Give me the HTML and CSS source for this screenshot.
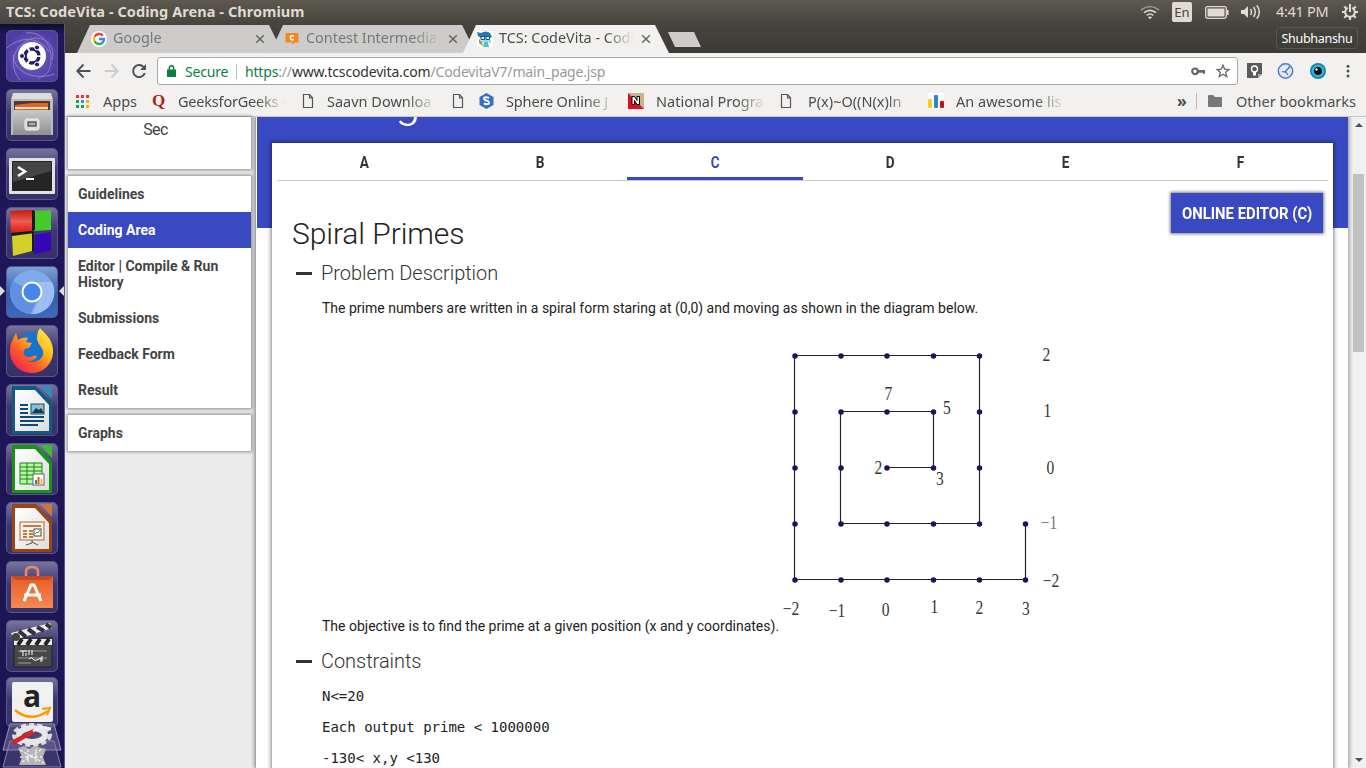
FILE: index.html
```html
<!DOCTYPE html>
<html lang="en">
<head>
<meta charset="utf-8">
<title>TCS: CodeVita - Coding Arena</title>
<link rel="stylesheet" href="styles.css">
</head>
<body>
<svg width="0" height="0" class="defs" aria-hidden="true">
  <defs>
    <linearGradient id="metal" x1="0" y1="0" x2="0" y2="1"><stop offset="0" stop-color="#c9c9c9"/><stop offset="1" stop-color="#8f8f8f"/></linearGradient>
    <linearGradient id="bag" x1="0" y1="0" x2="0" y2="1"><stop offset="0" stop-color="#e85a24"/><stop offset="1" stop-color="#f58a55"/></linearGradient>
    <linearGradient id="flame" x1=".9" y1="0" x2=".1" y2="1"><stop offset="0" stop-color="#fff04a"/><stop offset=".35" stop-color="#ffbd1f"/><stop offset=".65" stop-color="#ff5a2a"/><stop offset="1" stop-color="#e8155f"/></linearGradient>
    <linearGradient id="paper" x1="0" y1="0" x2="1" y2="1"><stop offset="0" stop-color="#fff"/><stop offset="1" stop-color="#dedede"/></linearGradient>
    <linearGradient id="red" x1="0" y1="0" x2="0" y2="1"><stop offset="0" stop-color="#c21a12"/><stop offset=".5" stop-color="#ef5b50"/><stop offset="1" stop-color="#d91c10"/></linearGradient>
    <symbol id="doc" viewBox="0 0 12 16"><path d="M1.500 1.500h6l3 3.300v9.700h-9zM7.500 1.500v3.500h3" fill="none" stroke="#555" stroke-width="1.200"/></symbol>
    <symbol id="close" viewBox="0 0 10 10"><path d="M1.200 1.200l7.600 7.600M8.800 1.200L1.200 8.800" stroke="#666" stroke-width="1.500" fill="none"/></symbol>
  </defs>
</svg>
<div class="screen">
  <header class="panel">
    <span class="panel-title">TCS: CodeVita - Coding Arena - Chromium</span>
    <div class="indicators">
      <svg class="i-wifi" width="20" height="16" viewBox="0 0 20 16" fill="none" stroke="#dfdbd2" stroke-width="1.700"><path d="M1 6q9-7 18 0" stroke="#99958c"/><path d="M4 8.700q6-4.700 12 0M6.700 11.300q3.300-2.600 6.600 0"/><path d="M8 13.200q2-1.400 4 0l-2 2z" fill="#dfdbd2" stroke="none"/></svg>
      <span class="lang">En</span>
      <svg class="i-bat" width="24" height="13" viewBox="0 0 24 13"><rect x=".7" y=".7" width="20.600" height="11.600" rx="1.800" fill="none" stroke="#dfdbd2" stroke-width="1.300"/><rect x="2.500" y="2.500" width="17" height="8" fill="#dfdbd2"/><path d="M22 4h1.600v5H22" fill="#dfdbd2"/></svg>
      <svg class="i-vol" width="20" height="16" viewBox="0 0 20 16"><path d="M0 6h3l4-4v12l-4-4H0z" fill="#dfdbd2"/><path d="M9.500 5q2 3 0 6M12.500 3q3.500 5 0 10M15.800 1.200q5 6.800 0 13.600" fill="none" stroke="#dfdbd2" stroke-width="1.500"/></svg>
      <span class="clock">4:41 PM</span>
      <svg class="i-gear" width="16" height="16" viewBox="0 0 16 16" fill="none" stroke="#dfdbd2"><path d="M5.800 3.800a4.800 4.800 0 1 0 4.400 0" stroke-width="2"/><path d="M8 0v8" stroke-width="2"/><path d="M8 13v3M0 8h3M13 8h3M2.300 2.500l2 2M13.700 2.500l-2 2M2.300 13.700l2-2M13.700 13.700l-2-2" stroke-width="2.200"/></svg>
    </div>
  </header>
  <div class="desktop">
    <nav class="launcher">
      <div class="tile dash"><svg viewBox="0 0 52 52"><g fill="none" stroke="#9d8ad4" stroke-opacity=".8" stroke-width="1"><path d="M14 50C2 36 6 14 28 8c12-1 22 8 18 22M20 3c14-2 26 10 25 27s-9 15-13 19M1 18C14 6 34 6 43 22M49 44C31 50 9 45 7 25"/></g><circle cx="26" cy="26" r="14" fill="#fff"/><circle cx="26" cy="26" r="7" fill="none" stroke="#2a1c63" stroke-width="3.400" stroke-dasharray="12.700 2" stroke-dashoffset="-1"/><g fill="#2a1c63" stroke="#fff" stroke-width="1"><circle cx="16" cy="26" r="2.500"/><circle cx="31" cy="17.500" r="2.500"/><circle cx="31" cy="34.500" r="2.500"/></g></svg></div>
      <div class="tile"><svg viewBox="0 0 52 52"><path d="M7 4h38l2 7H5z" fill="#ddd"/><path d="M5 10h42v36H5z" fill="#bcbcbc"/><path d="M8 12h36v10H8z" fill="#4b3b35"/><path d="M9 16l17-2h16v7H9z" fill="#e8631b"/><path d="M9 18h33v2H9z" fill="#f8e8d0"/><path d="M7 21h38v25H7z" fill="url(#metal)"/><rect x="19" y="30" width="14" height="11" rx="2" fill="#ddd" stroke="#eee"/><rect x="22" y="33" width="8" height="4" fill="#aaa" stroke="#444" stroke-width="1.200"/></svg></div>
      <div class="tile"><svg viewBox="0 0 52 52"><rect x="3" y="10" width="46" height="36" rx="1" fill="#e2e2e2"/><rect x="6" y="13" width="40" height="30" fill="#252525"/><path d="M7 14h38v9L7 34z" fill="#454545"/><path d="M12 19l7 4.500-7 4.500" fill="none" stroke="#fff" stroke-width="2.600"/><path d="M20 31h8" stroke="#fff" stroke-width="2"/></svg></div>
      <div class="tile"><svg viewBox="0 0 52 52"><path d="M4 4l22-1v21l-21 2z" fill="url(#red)"/><path d="M29 4l16-1v20l-17 1z" fill="#45cc2c"/><path d="M6 28l20-3v19L7 49z" fill="#d3cf26"/><path d="M29 28l16-3v19l-17 3z" fill="#3507b7"/><path d="M26 3l3 1v19l-3 1M5 26l21-2 3 2-23 3zM26 26l2 1v18l-2-1" fill="#1a1a1a"/></svg></div>
      <div class="tile active"><svg viewBox="0 0 52 52"><circle cx="26" cy="26" r="22" fill="#81a9ed"/><path d="M26 26L7 15a22 22 0 0 0 17 33l9-17z" fill="#6090e2"/><path d="M26 16h20A22 22 0 0 1 26 48l8-16z" fill="#9dbdf4"/><circle cx="26" cy="26" r="9.500" fill="#4685e9" stroke="#fff" stroke-width="2"/></svg></div>
      <div class="tile"><svg viewBox="0 0 52 52"><circle cx="27" cy="24" r="17" fill="#1673cf"/><path d="M34 3c4 5 12 10 13 21 1 14-9 24-21 24S4 39 4 26c0-7 3-12 6-18l2 7c3-2 6-3 10-2l-2 4 6 1-3 5c-7 0-7 7-2 9 5 1 7-3 10-1-2 6-10 5-10 5 10 4 18-4 16-10-1-4-5-7-6-12 0-5 1-8 3-11z" fill="url(#flame)"/></svg></div>
      <div class="tile"><svg viewBox="0 0 52 52"><path d="M6 2h24l16 17v31H6z" fill="#105a83"/><path d="M9 6h20l14 15v26H9z" fill="url(#paper)"/><path d="M34 2h12v13z" fill="#368bb8"/><g stroke="#0c4c76" stroke-width="2"><path d="M14 21h8M14 25h8M14 29h8M14 33h24M14 37h24M14 41h18"/></g><rect x="25" y="20" width="13" height="10" fill="#87bdd8" stroke="#0c4c76"/><path d="M26 29l4-5 3 2 2-2 3 5" fill="#183d45"/><circle cx="35" cy="22" r="1.500" fill="#e9b64e"/></svg></div>
      <div class="tile"><svg viewBox="0 0 52 52"><path d="M6 2h24l16 17v31H6z" fill="#199414"/><path d="M9 6h20l14 15v26H9z" fill="url(#paper)"/><path d="M34 2h12v13z" fill="#43ba34"/><rect x="14" y="20" width="22" height="21" fill="#baf5a5"/><path d="M14 20h22v21H14zM21 20v21M28 20v21M14 24h22M14 28h22M14 32h22M14 36h22" fill="none" stroke="#158712"/><rect x="27" y="31" width="11" height="11" fill="#fff" stroke="#666"/><path d="M29 41v-4h2v4" fill="#2b83bb"/><path d="M31.500 41v-7h2v7" fill="#d75a22"/><path d="M34.500 41v-5h2v5" fill="#e9bf34"/></svg></div>
      <div class="tile"><svg viewBox="0 0 52 52"><path d="M6 2h24l16 17v31H6z" fill="#9b4516"/><path d="M9 6h20l14 15v26H9z" fill="url(#paper)"/><path d="M34 2h12v13z" fill="#cb7540"/><rect x="14" y="20" width="24" height="18" fill="#fff4e8" stroke="#b65d2a"/><path d="M17 24h18M17 29h4M17 32h4M17 35h4M23 29h4M23 32h4M23 35h4" stroke="#b34f1c" stroke-width="1.700"/><rect x="28" y="27" width="7" height="7" fill="#fff" stroke="#444"/><path d="M29 32l2-2 1 1 2-3" fill="none" stroke="#35a43b"/><path d="M26 38v3l-6 2M26 40l6 3" fill="none" stroke="#555"/></svg></div>
      <div class="tile"><svg viewBox="0 0 52 52"><path d="M20 18V11q0-5 6-5t6 5v7" fill="none" stroke="#e98a65" stroke-width="2.500"/><path d="M5 15h42v32H5z" fill="url(#bag)"/><path d="M5 15h42l-4 4H10z" fill="#c64a1f"/><path d="M18 40l7-16h3l7 16M18 34h17" fill="none" stroke="#fff" stroke-width="3"/></svg></div>
      <div class="tile"><svg viewBox="0 0 52 52"><path d="M8 18h38v29H8z" fill="#484848" stroke="#222"/><path d="M5 13L44 3l2 5L9 20z" fill="#eee"/><path d="M13 11l7 6M22 9l7 5M31 7l7 4M40 4l5 4" stroke="#333" stroke-width="4"/><path d="M8 19h38v6H8z" fill="#eee"/><path d="M12 25l4-6M21 25l4-6M30 25l4-6M39 25l4-6" stroke="#222" stroke-width="4"/><circle cx="10" cy="17" r="4" fill="#444"/><path d="M12 31h29M12 38h29M12 43h13" stroke="#999"/><path d="M14 31h7M17 31v5M20 33v3M23 30v5M26 30v5M23 39q3-3 4 0t8-1v4M36 36v5" stroke="#fff" fill="none"/></svg></div>
      <div class="tile amazon"><svg viewBox="0 0 52 52"><rect x="6" y="5" width="41" height="40" rx="2" fill="#f1f1f1"/><text x="26" y="30" text-anchor="middle">a</text><path d="M9 33q15 13 33 1" fill="none" stroke="#ff9900" stroke-width="2.500"/><path d="M36 32l8-1-3 7" fill="none" stroke="#ff9900" stroke-width="2"/></svg></div>
      <div class="stack"><svg viewBox="0 0 60 48"><path d="M8 4h44l7 26H1z" fill="#77709d" fill-opacity=".55" stroke="#9992ba"/><path d="M8 21h44l7 26H1z" fill="#77709d" fill-opacity=".35" stroke="#8a84ac"/><ellipse cx="30" cy="15" rx="18" ry="10" fill="none" stroke="#ddd" stroke-width="4" stroke-dasharray="5 3"/><ellipse cx="30" cy="15" rx="13" ry="7" fill="none" stroke="#e7e7e7" stroke-width="6"/><path d="M12 22L32 11" stroke="#cf2626" stroke-width="4.500" stroke-linecap="round"/><path d="M31 11l8-4 10 2" stroke="#eee" stroke-width="3" fill="none"/><path d="M16 28l6-2 5 3 5-3 12 3-3 8 3 8H17l3-8z" fill="#b5b5b5"/><path d="M18 30l24 13M20 42l20-13M18 37h22M26 29v15M34 29v15" stroke="#eee" stroke-width="1.300" stroke-dasharray="3 2"/></svg></div>
      <i class="arrow arrow-l"></i><i class="arrow arrow-r"></i>
    </nav>
    <main class="browser">
      <div class="tabstrip">
        <div class="tab"><svg class="fav" viewBox="0 0 16 16"><circle cx="8" cy="8" r="8" fill="#fff"/><g fill="none" stroke-width="2.400"><path d="M11.800 4.700A5 5 0 0 0 3.600 5.700" stroke="#ea4335"/><path d="M3.600 5.700a5 5 0 0 0 0 4.600" stroke="#fbbc05"/><path d="M3.600 10.300a5 5 0 0 0 7.700 1.500" stroke="#34a853"/><path d="M11.300 11.800A5 5 0 0 0 13 8H8" stroke="#4285f4"/></g></svg><span class="tab-name">Google</span><svg class="x"><use href="#close"/></svg></div>
        <div class="tab"><svg class="fav" viewBox="0 0 16 16"><path d="M2.500 2h11q1 0 1 1v8.500h-4l-2 2.500v-2.500h-6q-1 0-1-1V3q0-1 1-1z" fill="#f7861c"/><path d="M10 5.200q-3.600-1.600-3.600 1.500t3.600 1.600" fill="none" stroke="#fff" stroke-width="1.500"/></svg><span class="tab-name">Contest Intermedia</span><svg class="x"><use href="#close"/></svg></div>
        <div class="tab current"><svg class="fav" viewBox="0 0 16 16"><path d="M0 0h16v16H0z" fill="#fff"/><path d="M0 1l4 1q5-3 9 0l2 4-2 1H4L1 5z" fill="#2678b5"/><path d="M4 6h9l-1 5H5z" fill="#9fdce8"/><path d="M4 5.500h3.500v3H4zM9 5.500h3.500v3H9z" fill="#def" stroke="#185178"/><path d="M7 11h4l1 5H6z" fill="#57bdd3"/><path d="M2 8l3 3 1 4-4-3z" fill="#899e3b"/><path d="M12 10l2-1-1 4z" fill="#57bdd3"/></svg><span class="tab-name">TCS: CodeVita - Codi</span><svg class="x"><use href="#close"/></svg></div>
        <i class="newtab"></i>
        <span class="profile">Shubhanshu</span>
      </div>
      <div class="toolbar">
        <svg class="navs" width="72" height="16" viewBox="0 0 72 16" fill="none" stroke-width="2"><path d="M14.500 8H1.500M7.500 1.500L1.300 8l6.200 6.500" stroke="#505050"/><path d="M28.500 8h13M35.500 1.500L41.700 8l-6.200 6.500" stroke="#ccc"/><path d="M67.500 4a6 6 0 1 0 1.300 6" stroke="#505050"/><path d="M70 1v6h-6z" fill="#505050" stroke="none"/></svg>
        <div class="omnibox">
          <svg class="lock" width="9" height="12" viewBox="0 0 9 12"><path d="M2.300 5V3a2.200 2.200 0 0 1 4.400 0v2" fill="none" stroke="#0b8043" stroke-width="1.400"/><path d="M0 4.500h9V12H0z" fill="#0b8043"/></svg>
          <span class="secure">Secure</span><i class="sep"></i>
          <span class="url"><b class="green">https</b>://<b class="host">www.tcscodevita.com</b>/CodevitaV7/main_page.jsp</span>
          <svg class="key" width="15" height="9" viewBox="0 0 15 9"><circle cx="4" cy="4.300" r="2.800" fill="none" stroke="#666" stroke-width="2.200"/><path d="M6 3h8v3.700h-2V5.700H6z" fill="#666"/></svg>
          <svg class="star" width="14" height="14" viewBox="0 0 14 14"><path d="M7 1.200l1.700 4 4.300.3-3.300 2.800 1.100 4.300L7 10.300l-3.800 2.300 1.100-4.300L1 5.500l4.300-.3z" fill="none" stroke="#666" stroke-width="1.300"/></svg>
        </div>
        <svg class="ext" width="80" height="16" viewBox="0 0 80 16"><path d="M0 0h15v11l-4 4H0z" fill="#5b5b5b"/><circle cx="7.500" cy="6" r="3" fill="none" stroke="#fff" stroke-width="1.400"/><path d="M6 9h3v3.500H6z" fill="#fff"/><path d="M11 15v-4h4" fill="#aaa"/><circle cx="38.500" cy="8" r="7.200" fill="#e5eefc" stroke="#4f78ca" stroke-width="1.400"/><circle cx="38.500" cy="8" r="5.300" fill="none" stroke="#a9c3eb" stroke-dasharray="1 1.500"/><path d="M43 3.500L38 9l-3-.5M38 8l3 4" stroke="#426abc" fill="none" stroke-width="1.200"/><circle cx="71" cy="8" r="8" fill="#1486ad"/><circle cx="71" cy="8" r="6.200" fill="#35b5dc"/><circle cx="71" cy="8" r="4" fill="#111"/><circle cx="69.500" cy="6.500" r="1.200" fill="#dff"/></svg>
        <svg class="dots" width="4" height="14" viewBox="0 0 4 14" fill="#555"><circle cx="2" cy="2.300" r="1.500"/><circle cx="2" cy="7" r="1.500"/><circle cx="2" cy="11.900" r="1.500"/></svg>
      </div>
      <div class="bookmarks">
        <div class="bm b1"><svg width="13" height="13" viewBox="0 0 13 13"><path d="M0 0h3v3H0zM5 0h3v3H5zM10 0h3v3h-3z" fill="#e33"/><path d="M0 5h3v3H0zM0 10h3v3H0zM5 10h3v3H5z" fill="#19a350"/><path d="M5 5h3v3H5z" fill="#4285f4"/><path d="M10 5h3v3h-3zM10 10h3v3h-3z" fill="#f5ad13"/></svg><span>Apps</span></div>
        <div class="bm b2"><em class="quora">Q</em><span>GeeksforGeeks -</span></div>
        <div class="bm b3"><svg width="12" height="16"><use href="#doc"/></svg><span>Saavn Downloa</span></div>
        <div class="bm b4"><svg width="12" height="16"><use href="#doc"/></svg></div>
        <div class="bm b5"><svg width="15" height="16" viewBox="0 0 15 16"><path d="M7.500 0l7 4v8l-7 4-7-4V4z" fill="#3671c6"/><path d="M10 5q-5-2-5 .8c0 2 5 1.400 5 3.600 0 2.400-3.500 2-5.200 1" fill="none" stroke="#fff" stroke-width="1.900"/></svg><span>Sphere Online J</span></div>
        <div class="bm b6"><svg width="16" height="16" viewBox="0 0 16 16"><path d="M0 0h16v16H0z" fill="#c5b48e"/><path d="M0 0l16 16H0z" fill="#e20b26"/><path d="M4 3.500h2.500l2.500 4v-4h2.500v8H9l-2.500-4v4H4z" fill="#fff" stroke="#000"/></svg><span>National Progra</span></div>
        <div class="bm b7"><svg width="12" height="16"><use href="#doc"/></svg><span>P(x)~O((N(x)ln</span></div>
        <div class="bm b8"><svg width="16" height="16" viewBox="0 0 16 16"><path d="M0 0h16v16H0z" fill="#fff"/><rect y="6" width="4" height="9" rx="1" fill="#f4cd20"/><rect x="6" y="2" width="4" height="13" rx="1" fill="#2985d6"/><rect x="12" y="8" width="4" height="7" rx="1" fill="#c7101f"/></svg><span>An awesome lis</span></div>
        <span class="more">»</span><i class="bsep"></i>
        <svg class="folder" width="15" height="12" viewBox="0 0 15 12"><path d="M0 1q0-1 1-1h4l2 2h6q1 0 1 1v8q0 1-1 1H1q-1 0-1-1z" fill="#777"/></svg>
        <span class="other">Other bookmarks</span>
      </div>
      <div class="page">
        <aside class="side">
          <div class="card user">Sec</div>
          <div class="card menu"><a>Guidelines</a><a class="on">Coding Area</a><a>Editor | Compile &amp; Run History</a><a>Submissions</a><a>Feedback Form</a><a>Result</a></div>
          <div class="card menu"><a>Graphs</a></div>
        </aside>
        <section class="content">
          <div class="banner"><h1>Coding Arena</h1></div>
          <article class="sheet">
            <div class="problems"><span><b>A</b></span><span><b>B</b></span><span class="sel"><b>C</b></span><span><b>D</b></span><span><b>E</b></span><span><b>F</b></span></div>
            <div class="actions"><button><span>ONLINE EDITOR (C)</span></button></div>
            <h2>Spiral Primes</h2>
            <h3>Problem Description</h3>
            <p class="intro">The prime numbers are written in a spiral form staring at (0,0) and moving as shown in the diagram below.</p>
            <div class="figure"><p>The objective is to find the prime at a given position (x and y coordinates).</p>
              <svg class="spiral" width="300" height="290" viewBox="778 340 300 290">
                <path d="M887 467.500H933.500V411.500H840.500V523.500H979.500V355.500H794.500V579.500H1025.500V523.500" fill="none" stroke="#222" stroke-width="1.150"/>
                <path class="pts" d="M795 356h0M841 356h0M887 356h0M933.500 356h0M979.500 356h0M795 412h0M841 412h0M887 412h0M933.500 412h0M979.500 412h0M795 468h0M841 468h0M887 468h0M933.500 468h0M979.500 468h0M795 524h0M841 524h0M887 524h0M933.500 524h0M979.500 524h0M1025.500 524h0M795 580h0M841 580h0M887 580h0M933.500 580h0M979.500 580h0M1025.500 580h0"/>
                <g class="nums" transform="scale(.84 1)"><text x="1245.800" y="361">2</text><text x="1247" y="417">1</text><text x="1250.600" y="474">0</text><text x="1248.800" y="529" class="pale">−1</text><text x="1251.200" y="587">−2</text><text x="1057.700" y="400">7</text><text x="1127.400" y="414">5</text><text x="1045.800" y="474">2</text><text x="1119" y="485">3</text><text x="941.700" y="615">−2</text><text x="996.400" y="617">−1</text><text x="1054.200" y="616">0</text><text x="1112.500" y="613">1</text><text x="1166" y="614">2</text><text x="1221.400" y="615">3</text></g>
              </svg>
            </div>
            <h3 class="h-con">Constraints</h3>
            <pre>N&lt;=20</pre><pre>Each output prime &lt; 1000000</pre><pre>-130&lt; x,y &lt;130</pre>
          </article>
        </section>
        <div class="scroll"><i class="up"></i><i class="thumb"></i><i class="down"></i></div>
      </div>
    </main>
  </div>
</div>
</body>
</html>
```
FILE: styles.css
```css
* { box-sizing: border-box; }
html, body { margin: 0; height: 100%; overflow: hidden; }
body { font-family: "Noto Sans", "Open Sans", sans-serif; }
svg { display: block; flex: none; }
.defs { position: absolute; }
.screen { width: 1366px; height: 768px; display: flex; flex-direction: column; overflow: hidden; }
.panel { height: 24px; flex: none; display: flex; justify-content: space-between; padding: 0 8px 0 6px; background: linear-gradient(#5d594f, #45443d); color: #dfdbd2; }
.panel-title { font-size: 14.500px; font-weight: 700; line-height: 23px; white-space: nowrap; letter-spacing: .07px; }
.indicators { display: flex; align-items: center; }
.lang { width: 20px; height: 20px; margin-left: 12px; border-radius: 2px; background: #dfdbd2; color: #45443d; font-size: 13px; line-height: 20px; text-align: center; }
.i-bat { margin-left: 13px; }
.i-vol { margin-left: 12px; }
.clock { width: 54px; margin: -2px 12px 0 15px; font-size: 14.500px; line-height: 20px; white-space: nowrap; letter-spacing: -.3px; }
.desktop { flex: 1; display: flex; min-height: 0; }

.launcher { width: 65px; flex: none; position: relative; display: flex; flex-direction: column; align-items: center; gap: 7px; padding: 6px 1px 0 0; background: linear-gradient(#0f0c2e, #1f1759 10px, #1c1553); border-right: 1px solid #5c5881; overflow: hidden; }
.tile { width: 52px; height: 52px; flex: none; border-radius: 5px; background: linear-gradient(#77739a, #3c3770 45%, #383168); border: 1px solid #5a558c; }
.tile svg { width: 52px; height: 52px; margin: -1px; }
.tile.dash { background: radial-gradient(#7d66c8, #4d3da3 75%); }
.tile.active { background: linear-gradient(#7da1d3, #315fb0 55%, #3d6ab9); }
.tile.amazon { margin-top: -2px; height: 50px; }
.amazon text { font: 700 30px "Open Sans", sans-serif; fill: #222; }
.stack { margin-top: -14px; }
.stack svg { width: 60px; height: 48px; }
.arrow { position: absolute; top: 262px; border: 5px solid transparent; }
.arrow-l { left: 0; border-left-color: #ddd; border-right: 0; }
.arrow-r { right: 0; border-right-color: #ddd; border-left: 0; }

.browser { flex: 1; min-width: 0; display: flex; flex-direction: column; }
.tabstrip { height: 29px; flex: none; display: flex; padding: 1px 16px 0 12px; background: linear-gradient(#45443d, #3c3b37); }
.tab { width: 206px; height: 28px; margin-right: -13px; display: flex; align-items: center; padding: 0 16px 0 14px; background: #cdcccb; clip-path: polygon(0 100%, 13px 0, 192px 0, 100% 100%); color: #777; font-size: 14.400px; }
.tab.current { position: relative; background: #f2f1f0; color: #4c4c4c; }
.fav { width: 16px; height: 16px; }
.tab-name { width: 137px; height: 20px; margin: -2px 0 0 6px; line-height: 20px; overflow: hidden; white-space: nowrap; -webkit-mask-image: linear-gradient(90deg, #000 78%, transparent 98%); mask-image: linear-gradient(90deg, #000 78%, transparent 98%); }
.x { width: 10px; height: 10px; margin-left: 5px; }
.newtab { width: 33px; height: 15px; margin: 7px 0 0 12px; background: #cdcccb; clip-path: polygon(0 0, 26px 0, 100% 100%, 7px 100%); }
.profile { width: 82px; height: 22px; margin: 2px -8px 0 auto; border: 1px solid #56544d; border-radius: 4px; color: #fff; font-size: 12.500px; line-height: 21px; text-align: center; white-space: nowrap; letter-spacing: -.3px; }
.tabstrip .profile { margin-right: -8px; }
.toolbar { height: 35px; flex: none; display: flex; align-items: center; background: #f2f1f0; padding: 1px 16px 0 11px; }
.omnibox { width: 1081px; height: 28px; margin-left: 9px; display: flex; align-items: center; padding: 0 7px 0 9px; background: #fff; border: 1px solid #aaa; border-radius: 3px; font-size: 14px; }
.secure { width: 43px; margin-left: 9px; color: #0b8043; white-space: nowrap; letter-spacing: -.2px; }
.sep { width: 1px; height: 15px; margin: 0 8px 0 8px; background: #bbb; }
.url { flex: 1; color: #999; white-space: nowrap; letter-spacing: -.17px; }
.url b { font-weight: 400; }
.url .green { color: #0b8043; }
.url .host { color: #333; }
.star { margin-left: 10px; }
.ext { margin-left: 9px; }
.dots { margin-left: auto; }
.bookmarks { height: 29px; flex: none; display: flex; align-items: center; padding: 0 10px 2px 11px; background: #f2f1f0; border-bottom: 1px solid #c8c7c6; color: #4c4c4c; font-size: 14.500px; line-height: 20px; white-space: nowrap; }
.bm { display: flex; align-items: center; flex: none; }
.bm span { overflow: hidden; -webkit-mask-image: linear-gradient(90deg, #000 72%, transparent 98%); mask-image: linear-gradient(90deg, #000 72%, transparent 98%); }
.b1 { width: 76px; }
.bm.b1 span { margin-left: 14px; -webkit-mask-image: none; mask-image: none; }
.b2 { width: 150px; letter-spacing: -.2px; }
.b2 span { width: 110px; margin-left: 12px; }
.b3 { width: 150px; }
.b3 span { width: 112px; margin-left: 13px; }
.b4 { width: 27px; }
.b5 { width: 149px; }
.b5 span { width: 112px; margin-left: 12px; letter-spacing: -.15px; }
.b6 { width: 152px; }
.b6 span { width: 112px; margin-left: 12px; }
.b7 { width: 148px; }
.b7 span { width: 109px; margin-left: 16px; }
.b8 { width: 220px; }
.b8 span { width: 112px; margin-left: 12px; }
.quora { width: 14px; font: 700 17px "Liberation Serif", serif; color: #b2201a; }
.more { width: 9px; margin-left: 29px; font-size: 16px; font-weight: 700; line-height: 16px; }
.bsep { width: 1px; height: 16px; margin: 0 11px 0 10px; background: #bbb; }
.other { margin-left: auto; }

.page { flex: 1; min-height: 0; display: flex; background: #fff; }
.side { width: 191px; flex: none; padding: 0 5px 0 3px; display: flex; flex-direction: column; gap: 7px; background: #ececec; font-family: Roboto, sans-serif; }
.card { background: #fff; box-shadow: 0 0 3px 1px rgba(0,0,0,.42); color: #444; }
.user { height: 52px; padding: 3px 8px 0 0; font-size: 16px; text-align: center; line-height: 19px; letter-spacing: -.6px; }
.menu a { display: block; padding: 10px; font-size: 14px; font-weight: 700; line-height: 16px; }
.menu .on { background: #3849c2; color: #fff; }
.content { width: 1092px; flex: none; border-left: 1px solid #fff; box-shadow: 0 0 4px 1px rgba(0,0,0,.5); position: relative; font-family: Roboto, sans-serif; background: #fff; clip-path: inset(0 -6px 0 -6px); }
.banner { height: 111px; background: #3849c2; overflow: hidden; }
.banner h1 { margin: -45px 0 0 24px; color: #fff; font-size: 45px; font-weight: 300; line-height: 60px; }
.sheet { width: 1061px; height: 700px; margin: -85px 0 0 15px; position: relative; background: #fff; box-shadow: 0 0 4px 1px rgba(0,0,0,.5); padding: 0 5px; color: #222; }
.problems { display: flex; height: 38px; border-bottom: 1px solid #c8c8c8; }
.problems span { flex: 1; text-align: center; font-size: 16px; line-height: 39px; height: 37px; color: #333; }
.problems b { display: inline-block; font-weight: 700; transform: scaleX(.85); }
.problems .sel { color: #3849c2; border-bottom: 3px solid #3849c2; }
.actions { display: flex; justify-content: flex-end; padding: 12px 5px 0 0; height: 35px; }
button { width: 152px; height: 40px; flex: none; display: flex; align-items: center; justify-content: center; border: 0; padding: 0; background: #3849c2; color: #fff; box-shadow: 0 0 3px 1px rgba(0,0,0,.5); font: 700 16px Roboto, sans-serif; white-space: nowrap; }
button span { transform: scaleX(.93); }
h2 { margin: 0 0 0 15px; font-size: 30px; font-weight: 300; line-height: 36px; letter-spacing: -.08px; }
h3 { margin: 5px 0 0 19px; display: flex; align-items: center; font-size: 20px; font-weight: 300; line-height: 32px; letter-spacing: -.04px; color: #333; }
h3::before { content: ""; width: 16px; height: 3px; margin-right: 9px; background: #333; }
.intro { margin: 11px 0 0 45px; font-size: 14px; line-height: 16px; }
.figure { display: flex; align-items: flex-end; height: 314px; margin: 0 0 0 45px; }
.figure p { width: 456px; margin: 0 0 -4px; font-size: 14px; line-height: 16px; white-space: nowrap; }
.pts { fill: none; stroke: #24105f; stroke-width: 5.500; stroke-linecap: round; }
.nums { font: 18.500px "Liberation Serif", serif; fill: #333; text-anchor: middle; }
.nums .pale { fill: #777; }
.h-con { margin-top: 15px; }
pre { margin: 11px 0 0 45px; font: 14px/20px "DejaVu Sans Mono", monospace; }
.h-con + pre { margin-top: 9px; }
.scroll { flex: 1; display: flex; flex-direction: column; align-items: center; background: #f1f1f1; margin-left: 2px; padding: 6px 0 6px 1px; }
.up, .down { border: 4px solid transparent; }
.up { border-top: 0; border-bottom-color: #505050; }
.down { border-bottom: 0; border-top-color: #505050; margin-top: auto; }
.thumb { width: 11px; height: 178px; margin-top: 47px; background: #c1c1c1; }
```
